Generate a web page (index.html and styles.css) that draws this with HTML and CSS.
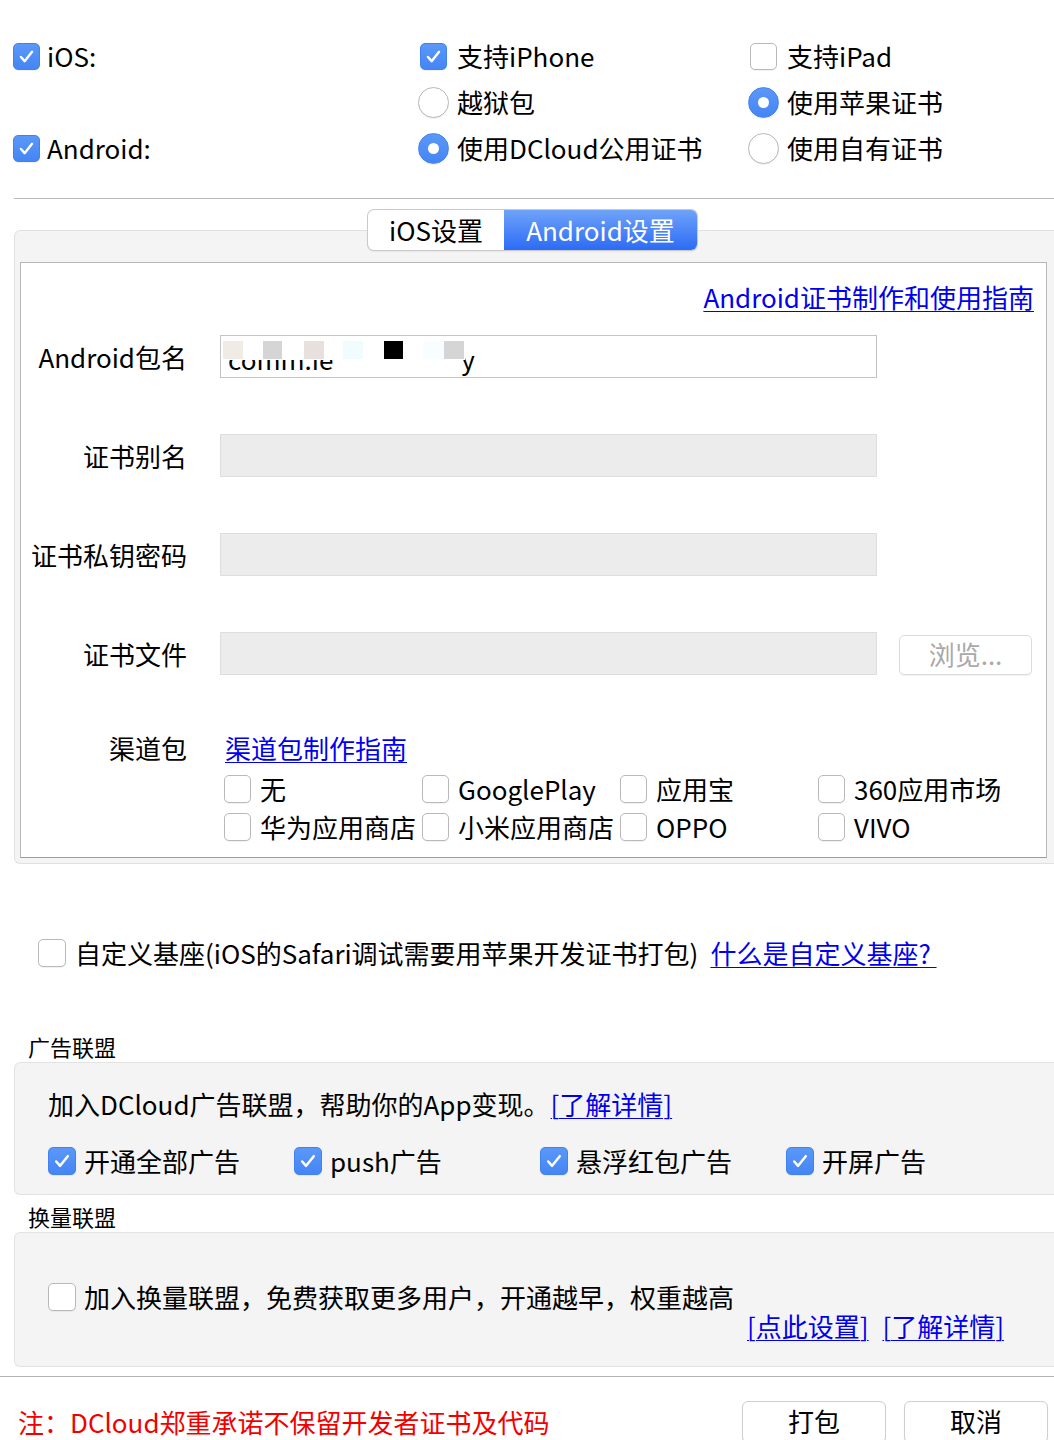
FILE: index.html
```html
<!DOCTYPE html>
<html lang="zh-CN">
<head>
<meta charset="utf-8">
<title>打包</title>
<link rel="stylesheet" href="styles.css">
</head>
<body>
<div class="top">
  <div class="opt c1"><span class="mark"><span class="cb on"><svg viewBox="0 0 27 27"><path d="M7.5 14 L11.5 18.5 L19.5 8.5"/></svg></span></span><span>iOS:</span></div>
  <div class="opt"><span class="mark"><span class="cb on"><svg viewBox="0 0 27 27"><path d="M7.5 14 L11.5 18.5 L19.5 8.5"/></svg></span></span><span>支持iPhone</span></div>
  <div class="opt"><span class="mark"><span class="cb"></span></span><span>支持iPad</span></div>
  <div></div>
  <div class="opt"><span class="mark"><span class="rd"></span></span><span>越狱包</span></div>
  <div class="opt"><span class="mark"><span class="rd on"></span></span><span>使用苹果证书</span></div>
  <div class="opt c1"><span class="mark"><span class="cb on"><svg viewBox="0 0 27 27"><path d="M7.5 14 L11.5 18.5 L19.5 8.5"/></svg></span></span><span>Android:</span></div>
  <div class="opt"><span class="mark"><span class="rd on"></span></span><span>使用DCloud公用证书</span></div>
  <div class="opt"><span class="mark"><span class="rd"></span></span><span>使用自有证书</span></div>
</div>

<div class="sep"></div>

<div class="tabwrap">
  <div class="seg">
    <div class="seg-inner">
      <div class="tab">iOS设置</div>
      <div class="tab active">Android设置</div>
    </div>
  </div>
  <div class="panel">
    <div class="inner">
      <div class="guide"><a href="#">Android证书制作和使用指南</a></div>
      <div class="frow first">
        <div class="flabel">Android包名</div>
        <div class="field pkg">
          <span class="pkgtext">comm.ie</span><span class="pkgtail">y</span>
          <span class="mask"><span class="blk b1"></span><span class="blk b2"></span><span class="blk b3"></span><span class="blk b4"></span><span class="blk b5"></span><span class="blk b6"></span><span class="blk b7"></span></span>
        </div>
      </div>
      <div class="frow">
        <div class="flabel">证书别名</div>
        <div class="field dis"></div>
      </div>
      <div class="frow">
        <div class="flabel">证书私钥密码</div>
        <div class="field dis"></div>
      </div>
      <div class="frow">
        <div class="flabel">证书文件</div>
        <div class="field dis"></div>
        <div class="browse">浏览...</div>
      </div>
      <div class="chan">
        <div class="flabel">渠道包</div>
        <a href="#" class="chanlink">渠道包制作指南</a>
      </div>
      <div class="chgrid">
        <div class="copt"><span class="cb tall"></span><span>无</span></div>
        <div class="copt"><span class="cb tall"></span><span>GooglePlay</span></div>
        <div class="copt"><span class="cb tall"></span><span>应用宝</span></div>
        <div class="copt"><span class="cb tall"></span><span>360应用市场</span></div>
        <div class="copt"><span class="cb tall"></span><span>华为应用商店</span></div>
        <div class="copt"><span class="cb tall"></span><span>小米应用商店</span></div>
        <div class="copt"><span class="cb tall"></span><span>OPPO</span></div>
        <div class="copt"><span class="cb tall"></span><span>VIVO</span></div>
      </div>
    </div>
  </div>
</div>

<div class="custom">
  <span class="cb wide"></span>
  <span>自定义基座(iOS的Safari调试需要用苹果开发证书打包)</span>
  <a href="#" class="customlink">什么是自定义基座?&nbsp;</a>
</div>

<div class="stitle first">广告联盟</div>
<div class="box adbox">
  <div class="adtext">加入DCloud广告联盟，帮助你的App变现。<a href="#">[了解详情]</a></div>
  <div class="adchecks">
    <div class="aopt"><span class="cb on wide"><svg viewBox="0 0 27 27"><path d="M7.5 14 L11.5 18.5 L19.5 8.5"/></svg></span><span>开通全部广告</span></div>
    <div class="aopt"><span class="cb on wide"><svg viewBox="0 0 27 27"><path d="M7.5 14 L11.5 18.5 L19.5 8.5"/></svg></span><span>push广告</span></div>
    <div class="aopt"><span class="cb on wide"><svg viewBox="0 0 27 27"><path d="M7.5 14 L11.5 18.5 L19.5 8.5"/></svg></span><span>悬浮红包广告</span></div>
    <div class="aopt"><span class="cb on wide"><svg viewBox="0 0 27 27"><path d="M7.5 14 L11.5 18.5 L19.5 8.5"/></svg></span><span>开屏广告</span></div>
  </div>
</div>

<div class="stitle second">换量联盟</div>
<div class="box swapbox">
  <div class="swaprow"><span class="cb wide"></span><span>加入换量联盟，免费获取更多用户，开通越早，权重越高</span></div>
  <div class="swaplinks"><a href="#">[点此设置]</a> <a href="#">[了解详情]</a></div>
</div>

<div class="sep2"></div>

<div class="bottom">
  <div class="note">注：DCloud郑重承诺不保留开发者证书及代码</div>
  <div class="btns">
    <div class="btn">打包</div>
    <div class="btn">取消</div>
  </div>
</div>
</body>
</html>
```

FILE: styles.css
```css
html, body {
  margin: 0;
  padding: 0;
  background: #fff;
}
body {
  width: 1054px;
  font-family: "Noto Sans CJK SC", "Noto Sans", sans-serif;
  font-size: 26px;
  color: #000;
  overflow: hidden;
}
a {
  color: #0000ee;
  text-decoration: underline;
  text-decoration-thickness: 1px;
  text-underline-offset: 3px;
}

/* checkbox + radio */
.cb {
  display: inline-flex;
  flex: none;
  box-sizing: border-box;
  width: 27px;
  height: 27px;
  border-radius: 5px;
  background: #fff;
  border: 1px solid #b9b9b9;
  box-shadow: 0 1px 1px rgba(0,0,0,0.06);
}
.cb.tall { height: 28px; }
.cb.wide { width: 28px; height: 28px; }
.cb.on {
  background: linear-gradient(#5a98f8, #4585f4);
  border-color: #4282f0;
}
.cb svg {
  width: 100%;
  height: 100%;
}
.cb svg path {
  fill: none;
  stroke: #fff;
  stroke-width: 2.6;
  stroke-linecap: round;
  stroke-linejoin: round;
}
.rd {
  display: inline-flex;
  align-items: center;
  justify-content: center;
  box-sizing: border-box;
  width: 31px;
  height: 31px;
  border-radius: 50%;
  background: #fff;
  border: 1px solid #b9b9b9;
  box-shadow: 0 1px 1px rgba(0,0,0,0.06);
}
.rd.on {
  background: linear-gradient(#5a98f8, #4585f4);
  border-color: #4282f0;
}
.rd.on::after {
  content: "";
  width: 11px;
  height: 11px;
  border-radius: 50%;
  background: #fff;
}

/* top options */
.top {
  display: grid;
  grid-template-columns: 407px 330px 1fr;
  grid-auto-rows: 46px;
  padding: 33px 0 0 11px;
}
.opt {
  display: flex;
  align-items: center;
  gap: 8px;
  line-height: 46px;
}
.opt.c1 { gap: 5px; }
.mark {
  width: 31px;
  display: flex;
  justify-content: center;
  flex: none;
}

.sep {
  height: 1px;
  background: #b9b9b9;
  margin: 27px 0 0 14px;
}

/* tabs */
.tabwrap {
  margin: 11px 0 0 14px;
}
.seg {
  display: flex;
  justify-content: center;
  position: relative;
  z-index: 1;
  margin-bottom: -20px;
  padding-right: 3px;
}
.seg-inner {
  display: flex;
  height: 40px;
  border-radius: 6px;
  overflow: hidden;
  background: #fff;
  box-shadow: 0 0 0 1px #cacaca, 0 1px 2px rgba(0,0,0,0.18);
}
.tab {
  line-height: 39px;
  text-align: center;
}
.tab:first-child { width: 136px; }
.tab.active {
  width: 193px;
  color: #fff;
  background: linear-gradient(#6fa3f9, #2c6bf5);
}
.panel {
  background: #f4f4f4;
  border: 1px solid #e1e1e1;
  border-right: none;
  border-radius: 6px 0 0 6px;
  padding: 31px 7px 5px 5px;
}
.inner {
  background: #fff;
  border: 1px solid #b7b7b7;
  border-bottom-color: #9c9c9c;
  padding: 17px 12px 11px 0;
}
.guide {
  text-align: right;
  line-height: 34px;
}
.frow {
  display: flex;
  align-items: center;
  height: 43px;
  margin-top: 56px;
}
.frow.first { margin-top: 21px; }
.flabel {
  width: 166px;
  flex: none;
  text-align: right;
  line-height: 34px;
}
.field {
  box-sizing: border-box;
  width: 657px;
  height: 43px;
  margin-left: 33px;
  flex: none;
}
.field.dis {
  background: #ececec;
  border: 1px solid #dedede;
}
.pkg {
  position: relative;
  background: #fff;
  border: 1px solid #c4c4c4;
  overflow: hidden;
  line-height: 41px;
  padding: 2px 0 0 7px;
  white-space: nowrap;
}
.pkgtail { margin-left: 128px; }
.mask {
  position: absolute;
  left: 1px;
  top: 3px;
  width: 243px;
  height: 21px;
  background: #fff;
}
.blk {
  position: absolute;
  top: 2px;
  height: 18px;
}
.b1 { left: 1px; width: 20px; background: #f1ebe5; }
.b2 { left: 41px; width: 19px; background: #d5d5d5; }
.b3 { left: 82px; width: 20px; background: #e7e0dc; }
.b4 { left: 121px; width: 20px; background: #f1fcff; }
.b5 { left: 162px; width: 19px; background: #000; }
.b6 { left: 201px; width: 21px; background: #f8fdff; }
.b7 { left: 222px; width: 20px; background: #d5d5d5; }
.browse {
  box-sizing: border-box;
  width: 133px;
  height: 40px;
  margin: 3px 0 0 22px;
  border: 1px solid #dcdcdc;
  border-radius: 5px;
  background: #fff;
  box-shadow: 0 1px 1px rgba(0,0,0,0.06);
  color: #a9a9a9;
  text-align: center;
  line-height: 36px;
}
.chan {
  display: flex;
  align-items: center;
  margin-top: 56px;
  line-height: 34px;
}
.chanlink { margin-left: 38px; }
.chgrid {
  display: grid;
  grid-template-columns: repeat(4, 198px);
  grid-auto-rows: 38px;
  margin: 5px 0 0 203px;
}
.copt {
  display: flex;
  align-items: center;
  gap: 9px;
  white-space: nowrap;
}
.copt span:last-child { margin-top: -2px; }

/* custom base */
.custom {
  display: flex;
  align-items: center;
  margin: 72px 0 0 38px;
  line-height: 34px;
}
.custom .cb { margin-right: 9px; }
.customlink { margin-left: 12px; }

/* sections */
.stitle {
  font-size: 22px;
  line-height: 30px;
  margin-left: 28px;
}
.stitle.first { margin-top: 61px; }
.stitle.second { margin-top: 6px; }
.box {
  margin: 1px 0 0 14px;
  background: #f4f4f4;
  border: 1px solid #e3e3e3;
  border-right: none;
  border-radius: 6px 0 0 6px;
}
.adbox {
  padding: 24px 0 16px 33px;
}
.adtext { line-height: 34px; }
.adtext a { margin-left: 1px; }
.adchecks {
  display: flex;
  margin-top: 23px;
  line-height: 34px;
}
.aopt {
  width: 246px;
  display: flex;
  align-items: center;
  gap: 8px;
}
.swapbox {
  padding: 47px 50px 28px 33px;
}
.swaprow {
  display: flex;
  align-items: center;
  gap: 8px;
  line-height: 34px;
}
.swaplinks {
  text-align: right;
  line-height: 24px;
  word-spacing: 8px;
}

.sep2 {
  height: 1px;
  background: #b4b4b4;
  margin-top: 9px;
}

/* bottom */
.bottom {
  display: flex;
  align-items: center;
  margin-top: 24px;
  padding: 0 6px 0 18px;
}
.note {
  color: #f20000;
  line-height: 34px;
}
.btns {
  margin-left: auto;
  display: flex;
  gap: 18px;
}
.btn {
  box-sizing: border-box;
  width: 144px;
  height: 42px;
  border: 1px solid #cfcfcf;
  border-radius: 6px;
  background: #fff;
  box-shadow: 0 1px 1px rgba(0,0,0,0.1);
  text-align: center;
  line-height: 38px;
}
```
